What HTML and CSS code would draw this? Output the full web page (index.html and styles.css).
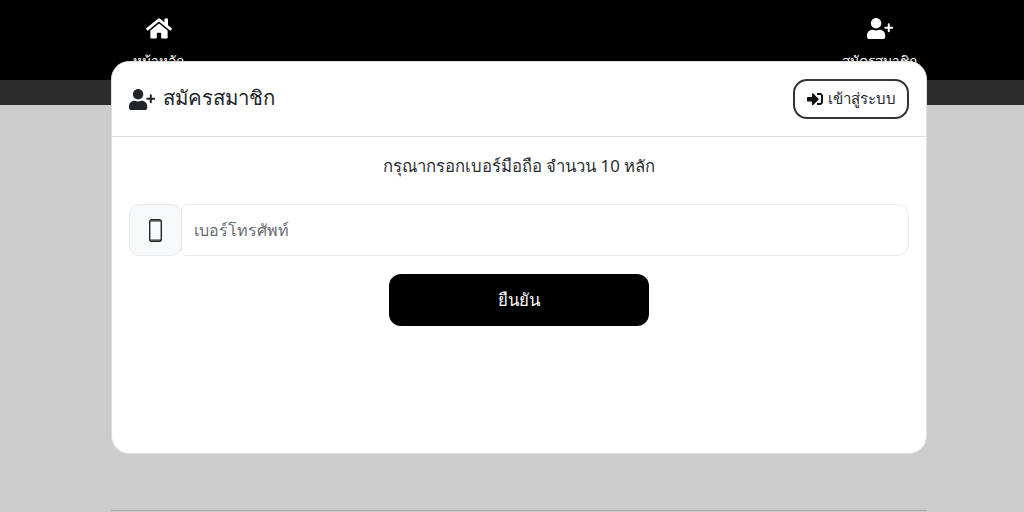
FILE: index.html
```html
<!DOCTYPE html>
<html lang="th">
<head>
<meta charset="utf-8">
<title>สมัครสมาชิก</title>
<link rel="stylesheet" href="styles.css">
</head>
<body>
<header class="topbar">
  <nav class="nav">
    <a class="nav-item">
      <svg class="nav-icon home" viewBox="0 0 576 512"><path d="M280.37 148.26L96 300.11V464a16 16 0 0 0 16 16l112.06-.29a16 16 0 0 0 15.92-16V368a16 16 0 0 1 16-16h64a16 16 0 0 1 16 16v95.64a16 16 0 0 0 16 16.05L464 480a16 16 0 0 0 16-16V300L295.67 148.26a12.19 12.19 0 0 0-15.3 0zM571.6 251.47L488 182.56V44.05a12 12 0 0 0-12-12h-56a12 12 0 0 0-12 12v72.61L318.47 43a48 48 0 0 0-61 0L4.34 251.47a12 12 0 0 0-1.6 16.9l25.5 31A12 12 0 0 0 45.15 301l235.22-193.74a12.19 12.19 0 0 1 15.3 0L530.9 301a12 12 0 0 0 16.9-1.6l25.5-31a12 12 0 0 0-1.7-16.93z"/></svg>
      <span>หน้าหลัก</span>
    </a>
    <a class="nav-item">
      <svg class="nav-icon user" viewBox="0 0 640 512"><path d="M224 256c70.7 0 128-57.3 128-128S294.7 0 224 0 96 57.3 96 128s57.3 128 128 128zm89.6 32h-16.7c-22.2 10.2-46.9 16-72.9 16s-50.6-5.8-72.9-16h-16.7C60.2 288 0 348.2 0 422.4V464c0 26.5 21.5 48 48 48h352c26.5 0 48-21.5 48-48v-41.6c0-74.2-60.2-134.4-134.4-134.4z"/><path class="plus" d="M536 150v172M450 236h172"/></svg>
      <span>สมัครสมาชิก</span>
    </a>
  </nav>
</header>
<div class="subbar"></div>
<main class="content"><div class="rule"></div></main>

<div class="modal-layer">
  <section class="card">
    <div class="card-head">
      <h1 class="title">
        <svg class="title-icon" viewBox="0 0 640 512"><path d="M224 256c70.7 0 128-57.3 128-128S294.7 0 224 0 96 57.3 96 128s57.3 128 128 128zm89.6 32h-16.7c-22.2 10.2-46.9 16-72.9 16s-50.6-5.8-72.9-16h-16.7C60.2 288 0 348.2 0 422.4V464c0 26.5 21.5 48 48 48h352c26.5 0 48-21.5 48-48v-41.6c0-74.2-60.2-134.4-134.4-134.4z"/><path class="plus" d="M536 150v172M450 236h172"/></svg>
        สมัครสมาชิก
      </h1>
      <a class="login-btn">
        <svg class="login-icon" viewBox="0 0 512 512"><path d="M416 448h-84c-6.6 0-12-5.4-12-12v-40c0-6.6 5.4-12 12-12h84c17.7 0 32-14.3 32-32V160c0-17.7-14.3-32-32-32h-84c-6.6 0-12-5.4-12-12V76c0-6.6 5.4-12 12-12h84c53 0 96 43 96 96v192c0 53-43 96-96 96zm-47-201L201 79c-15-15-41-4.5-41 17v96H24c-13.3 0-24 10.7-24 24v96c0 13.3 10.7 24 24 24h136v96c0 21.5 26 32 41 17l168-168c9.3-9.4 9.3-24.6 0-34z"/></svg>
        เข้าสู่ระบบ
      </a>
    </div>
    <div class="card-body">
      <p class="hint">กรุณากรอกเบอร์มือถือ จำนวน 10 หลัก</p>
      <div class="field">
        <span class="addon">
          <svg class="phone-icon" viewBox="0 0 130 230"><path d="M26 0h78c14 0 26 12 26 26v178c0 14-12 26-26 26H26C12 230 0 218 0 204V26C0 12 12 0 26 0zM14 24v182c0 5 4 9 9 9h84c5 0 9-4 9-9V24c0-5-4-9-9-9H23c-5 0-9 4-9 9z"/><path d="M14 16h102v10H14zM14 204h102v10H14z"/></svg>
        </span>
        <input class="input" type="text" placeholder="เบอร์โทรศัพท์">
      </div>
      <button class="submit" type="button">ยืนยัน</button>
    </div>
  </section>
</div>
</body>
</html>
```
FILE: styles.css
```css
* { box-sizing: border-box; }
html, body { height: 100%; }
body {
  margin: 0;
  background: #ccc;
  overflow: hidden;
  font-family: "Noto Sans", "Liberation Sans", sans-serif;
  color: #212529;
}
.topbar { height: 80px; background: #000; padding-left: 14px; }
.nav {
  width: 816px;
  margin: 0 auto;
  display: flex;
  justify-content: space-between;
}
.nav-item {
  width: 95px;
  padding-top: 17px;
  display: flex;
  flex-direction: column;
  align-items: center;
  color: #fff;
  font-size: 13.8px;
  line-height: 21px;
}
.nav-icon { fill: #fff; display: block; }
.home { width: 26px; height: 23px; margin-bottom: 10px; }
.user { width: 26px; height: 21px; margin: 1px 0 11px; }
.plus { fill: none; stroke: currentColor; stroke-width: 50; stroke-linecap: round; }
.subbar { height: 25px; background: #2c2c2c; }
.content { padding: 405px 0 0 14px; }
.rule { width: 816px; margin: 0 auto; border-top: 1px solid #a9a9a9; }

.modal-layer {
  position: absolute;
  inset: 0;
  padding: 61px 0 0 14px;
}
.card {
  width: 816px;
  height: 393px;
  margin: 0 auto;
  background: #fff;
  border: 1px solid #dedede;
  border-radius: 18px;
  overflow: hidden;
}
.card-head {
  height: 75px;
  padding: 0 17px;
  display: flex;
  align-items: center;
  justify-content: space-between;
  border-bottom: 1px solid #dcdcdc;
}
.title {
  margin: -2px 0 0;
  display: flex;
  align-items: center;
  gap: 8px;
  font-size: 20.4px;
  font-weight: 500;
  color: #212529;
}
.title-icon { width: 26px; height: 21px; fill: #212529; color: #212529; margin-top: 2px; }
.login-btn {
  width: 116px;
  height: 40px;
  display: flex;
  align-items: center;
  justify-content: center;
  gap: 4px;
  border: 2px solid #333;
  border-radius: 14px;
  font-size: 15px;
  color: #212529;
}
.login-icon { width: 18px; height: 16px; fill: #111; }
.card-body { padding: 0 17px; display: flex; flex-direction: column; align-items: center; }
.hint { margin: 17px 0 26px; height: 24px; line-height: 24px; font-size: 16.7px; color: #2b2f33; }
.field { width: 100%; height: 52px; display: flex; }
.addon {
  width: 53px;
  display: flex;
  align-items: center;
  justify-content: center;
  padding-right: 1px;
  background: #f6f8fa;
  border: 1px solid #e8eaed;
  border-radius: 10px;
}
.phone-icon { width: 13px; height: 23px; fill: #212529; }
.input {
  flex: 1;
  margin-left: -1px;
  padding: 0 12px;
  border: 1px solid #e8eaed;
  border-radius: 6px 12px 12px 6px;
  background: #fff;
  font: inherit;
  font-size: 16px;
  color: #212529;
  outline: none;
}
.input::placeholder { color: #666c72; opacity: 1; }
.submit {
  width: 260px;
  height: 52px;
  margin-top: 18px;
  padding-bottom: 2px;
  background: #000;
  color: #fff;
  border: 0;
  border-radius: 12px;
  font: inherit;
  font-size: 16.8px;
  font-weight: 500;
}
```
